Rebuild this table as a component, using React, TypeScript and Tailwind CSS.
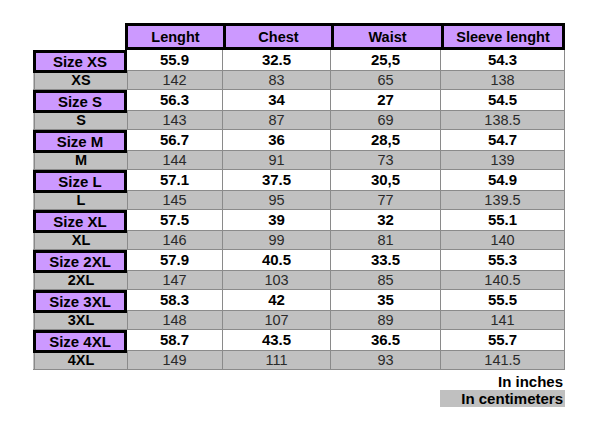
import React from 'react';

type SizeRow = {
  label: string;
  inches: string[];
  cm: string[];
};

const sizes: SizeRow[] = [
  { label: 'XS', inches: ['55.9', '32.5', '25,5', '54.3'], cm: ['142', '83', '65', '138'] },
  { label: 'S', inches: ['56.3', '34', '27', '54.5'], cm: ['143', '87', '69', '138.5'] },
  { label: 'M', inches: ['56.7', '36', '28,5', '54.7'], cm: ['144', '91', '73', '139'] },
  { label: 'L', inches: ['57.1', '37.5', '30,5', '54.9'], cm: ['145', '95', '77', '139.5'] },
  { label: 'XL', inches: ['57.5', '39', '32', '55.1'], cm: ['146', '99', '81', '140'] },
  { label: '2XL', inches: ['57.9', '40.5', '33.5', '55.3'], cm: ['147', '103', '85', '140.5'] },
  { label: '3XL', inches: ['58.3', '42', '35', '55.5'], cm: ['148', '107', '89', '141'] },
  { label: '4XL', inches: ['58.7', '43.5', '36.5', '55.7'], cm: ['149', '111', '93', '141.5'] },
];

const headers = ['Lenght', 'Chest', 'Waist', 'Sleeve lenght'];
const colWidths = ['w-[96px]', 'w-[108px]', 'w-[110px]', 'w-[124px]'];

const App: React.FC = () => {
  return (
    <div
      className="w-[600px] h-[426px] bg-white text-black pt-[23px] pl-[33px]"
      style={{ fontFamily: '"Liberation Sans", Arial, sans-serif' }}
    >
      {/* header */}
      <div className="flex">
        <div className="w-[92px]" />
        <div className="flex h-[27px] border-[3px] border-black bg-[#cc99ff] text-[14.5px] font-bold">
          {headers.map((h, i) => (
            <div
              key={h}
              className={`flex items-center justify-center pt-[2px] ${
                i === 0 ? 'w-[95px]' : i === 1 ? 'w-[108px] border-l-[3px] border-black' : i === 2 ? 'w-[110px] border-l-[3px] border-black' : 'w-[121px] border-l-[3px] border-black'
              }`}
            >
              {h}
            </div>
          ))}
        </div>
      </div>

      {/* body */}
      <div className="w-[532px]">
        {sizes.map((s) => (
          <div key={s.label}>
            <div className="flex h-[21px] text-[15px] font-bold">
              <div className="relative z-10 w-[94px] h-[23px] shrink-0 flex items-center justify-center border-[3px] border-black bg-[#cc99ff] pt-[1px]">
                Size {s.label}
              </div>
              {s.inches.map((v, i) => (
                <div
                  key={i}
                  className={`${colWidths[i]} flex items-center justify-center bg-white border-r border-b border-[#8a8a8a] pt-[1px]`}
                >
                  {v}
                </div>
              ))}
            </div>
            <div className="flex h-[19px] bg-[#c0c0c0] text-[14.5px] border-b border-[#8a8a8a]">
              <div className="w-[94px] flex items-center justify-center font-bold border-l border-r border-[#8a8a8a] ml-[1px] -mr-[1px] pt-[1px]">
                {s.label}
              </div>
              {s.cm.map((v, i) => (
                <div
                  key={i}
                  className={`${colWidths[i]} flex items-center justify-center text-[#2a2a2a] border-r border-[#8a8a8a] pt-[1px]`}
                >
                  {v}
                </div>
              ))}
            </div>
          </div>
        ))}

        {/* legend */}
        <div className="flex flex-col items-end mt-[3px] text-[15px] font-bold">
          <div className="pr-[2px] leading-[17px]">In inches</div>
          <div className="w-[125px] bg-[#c0c0c0] text-right pr-[2px] leading-[17px]">In centimeters</div>
        </div>
      </div>
    </div>
  );
};

export default App;
